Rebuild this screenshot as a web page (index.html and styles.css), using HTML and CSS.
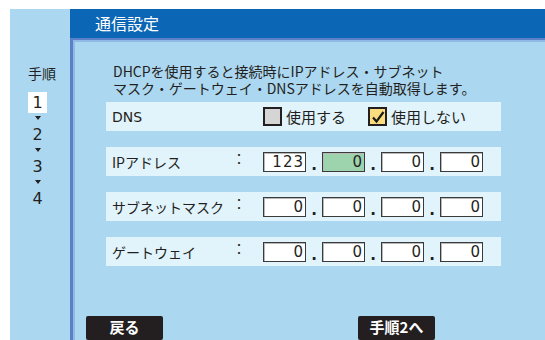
FILE: index.html
```html
<!DOCTYPE html>
<html lang="ja">
<head>
    <meta charset="utf-8">
    <title>通信設定</title>
    <link rel="stylesheet" href="styles.css">
</head>
<body>
<div class="screen">
    <div class="steps">
        <div class="steps-title">手順</div>
        <ol class="step-list">
            <li class="step current">1</li>
            <li class="arrow"></li>
            <li class="step">2</li>
            <li class="arrow"></li>
            <li class="step">3</li>
            <li class="arrow"></li>
            <li class="step">4</li>
        </ol>
    </div>
    <div class="main">
        <div class="titlebar">通信設定</div>
        <div class="panel">
            <p class="note">DHCPを使用すると接続時にIPアドレス・サブネット<br>マスク・ゲートウェイ・DNSアドレスを自動取得します。</p>

            <div class="row">
                <span class="label latin">DNS</span>
                <span class="colon"></span>
                <label class="opt"><span class="box"></span>使用する</label>
                <label class="opt"><span class="box checked"><svg width="14" height="14" viewBox="0 0 14 14"><path d="M2 7.5 L5.5 11.5 L12.5 2" fill="none" stroke="#1a1a1a" stroke-width="2.2"/></svg></span>使用しない</label>
            </div>

            <div class="row">
                <span class="label">IPアドレス</span>
                <span class="colon">：</span>
                <div class="ip">
                    <span class="octet">123</span><span class="dot">.</span>
                    <span class="octet active">0</span><span class="dot">.</span>
                    <span class="octet">0</span><span class="dot">.</span>
                    <span class="octet">0</span>
                </div>
            </div>

            <div class="row">
                <span class="label">サブネットマスク</span>
                <span class="colon">：</span>
                <div class="ip">
                    <span class="octet">0</span><span class="dot">.</span>
                    <span class="octet">0</span><span class="dot">.</span>
                    <span class="octet">0</span><span class="dot">.</span>
                    <span class="octet">0</span>
                </div>
            </div>

            <div class="row">
                <span class="label">ゲートウェイ</span>
                <span class="colon">：</span>
                <div class="ip">
                    <span class="octet">0</span><span class="dot">.</span>
                    <span class="octet">0</span><span class="dot">.</span>
                    <span class="octet">0</span><span class="dot">.</span>
                    <span class="octet">0</span>
                </div>
            </div>

            <div class="buttons">
                <span class="btn">戻る</span>
                <span class="btn">手順2へ</span>
            </div>
        </div>
    </div>
</div>
</body>
</html>
```

FILE: styles.css
```css
* {
    box-sizing: border-box;
}

body {
    margin: 0;
    background-color: #ffffff;
    font-family: "Noto Sans CJK JP", sans-serif;
    color: #231f20;
}

.screen {
    margin: 9px 0 0 10px;
    height: 331px;
    background-color: #acd7f1;
    display: flex;
    overflow: hidden;
}

/* left step column */
.steps {
    width: 60px;
    padding: 56px 0 0 18px;
    display: flex;
    flex-direction: column;
    align-items: flex-start;
}

.steps-title {
    font-size: 14px;
    line-height: 17px;
}

.step-list {
    list-style: none;
    margin: 10px 0 0 0;
    padding: 0;
    width: 19px;
    display: flex;
    flex-direction: column;
    align-items: center;
}

.step {
    width: 19px;
    height: 21px;
    line-height: 21px;
    text-align: center;
    font-family: "DejaVu Sans", sans-serif;
    font-size: 16px;
}

.step.current {
    background-color: #ffffff;
}

.arrow {
    width: 0;
    height: 0;
    margin: 3px 0 4px;
    border-left: 3px solid transparent;
    border-right: 3px solid transparent;
    border-top: 4px solid #231f20;
}

/* right side */
.main {
    flex: 1;
    display: flex;
    flex-direction: column;
}

.titlebar {
    height: 29px;
    line-height: 29px;
    padding-left: 25px;
    background-color: #0b66b5;
    color: #ffffff;
    font-size: 16px;
}

.panel {
    flex: 1;
    border-left: 3px solid #5b80c8;
    border-top: 2px solid #5b80c8;
    box-shadow: inset 2px 2px 0 #92b8e5;
    padding-top: 23px;
    display: flex;
    flex-direction: column;
}

.note {
    margin: 0 0 5px 40px;
    font-size: 14px;
    line-height: 17px;
}

.row {
    width: 395px;
    height: 29px;
    margin: 0 0 16px 33px;
    padding-left: 6px;
    background-color: #e1f3fb;
    display: flex;
    align-items: center;
    font-size: 14px;
}

.label {
    width: 125px;
}

.latin {
    font-family: "DejaVu Sans", sans-serif;
    font-size: 14px;
}

.colon {
    width: 26px;
    align-self: flex-start;
    padding-top: 3px;
    line-height: 17px;
    text-indent: -5px;
}

/* DNS radio boxes */
.opt {
    display: flex;
    align-items: center;
    font-size: 15px;
    margin-right: 22px;
}

.box {
    width: 19px;
    height: 19px;
    margin-right: 4px;
    border: 2px solid #231f20;
    background-color: #d5d5d5;
    display: flex;
    align-items: center;
    justify-content: center;
}

.box.checked {
    background-color: #fbdc7e;
}

/* address fields */
.ip {
    display: flex;
    align-items: center;
}

.octet {
    width: 43px;
    height: 20px;
    border: 1px solid #3a3a3a;
    box-shadow: inset 1px 1px 0 #b8b8b8;
    background-color: #ffffff;
    text-align: right;
    padding-right: 1px;
    font-family: "DejaVu Sans", sans-serif;
    font-size: 15px;
    line-height: 18px;
    letter-spacing: 1px;
}

.octet.active {
    background-color: #9dd4ae;
}

.dot {
    width: 16px;
    text-align: center;
    align-self: flex-end;
    font-family: "DejaVu Sans", sans-serif;
    font-weight: bold;
    font-size: 15px;
    line-height: 14px;
}

/* bottom buttons */
.buttons {
    margin-top: auto;
    padding-left: 13px;
    display: flex;
    gap: 195px;
}

.btn {
    width: 77px;
    height: 24px;
    line-height: 22px;
    border-radius: 2px;
    background-color: #231f20;
    color: #ffffff;
    text-align: center;
    font-size: 15px;
    font-weight: bold;
}
```
